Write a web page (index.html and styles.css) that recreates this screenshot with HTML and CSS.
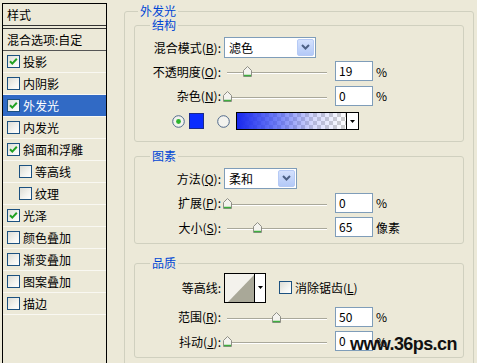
FILE: index.html
```html
<!DOCTYPE html>
<html>
<head>
<meta charset="utf-8">
<link rel="stylesheet" href="styles.css">
</head>
<body>
<div class="dialog">
  <div class="styles-panel">
    <div class="panel-head">样式</div>
    <div class="panel-blend">混合选项:自定</div>
    <ul class="style-list">
      <li class="item"><span class="cb"><svg viewBox="0 0 11 11" width="11" height="11"><path d="M2 5.2 L4.3 7.6 L8.8 2.8" stroke="#21A121" stroke-width="2" fill="none"/></svg></span>投影</li>
      <li class="item"><span class="cb"></span>内阴影</li>
      <li class="item selected"><span class="cb"><svg viewBox="0 0 11 11" width="11" height="11"><path d="M2 5.2 L4.3 7.6 L8.8 2.8" stroke="#21A121" stroke-width="2" fill="none"/></svg></span>外发光</li>
      <li class="item"><span class="cb"></span>内发光</li>
      <li class="item"><span class="cb"><svg viewBox="0 0 11 11" width="11" height="11"><path d="M2 5.2 L4.3 7.6 L8.8 2.8" stroke="#21A121" stroke-width="2" fill="none"/></svg></span>斜面和浮雕</li>
      <li class="item sub"><span class="cb"></span>等高线</li>
      <li class="item sub"><span class="cb"></span>纹理</li>
      <li class="item"><span class="cb"><svg viewBox="0 0 11 11" width="11" height="11"><path d="M2 5.2 L4.3 7.6 L8.8 2.8" stroke="#21A121" stroke-width="2" fill="none"/></svg></span>光泽</li>
      <li class="item"><span class="cb"></span>颜色叠加</li>
      <li class="item"><span class="cb"></span>渐变叠加</li>
      <li class="item"><span class="cb"></span>图案叠加</li>
      <li class="item"><span class="cb"></span>描边</li>
    </ul>
  </div>

  <div class="main">
    <div class="group outer">
      <span class="group-title">外发光</span>

      <div class="group sub-group g-structure">
        <span class="group-title">结构</span>
        <div class="row h24">
          <span class="lbl">混合模式(<u>B</u>):</span>
          <div class="combo w92"><span class="combo-text">滤色</span><span class="combo-btn"><svg viewBox="0 0 9 6" width="9" height="6"><path d="M1 1 L4.5 4.5 L8 1" stroke="#4D6185" stroke-width="2" fill="none"/></svg></span></div>
        </div>
        <div class="row h24">
          <span class="lbl">不透明度(<u>O</u>):</span>
          <div class="slider"><div class="track"></div><svg class="thumb" style="left:20px" viewBox="0 0 9 11" width="9" height="11"><path d="M0.5 4.5 L4.5 0.5 L8.5 4.5 V10.5 H0.5 Z" fill="#F4F3EE" stroke="#8F8F86"/><path d="M1 9.5 H8" stroke="#3FAE3F" stroke-width="1.5"/></svg></div>
          <span class="num">19</span><span class="unit">%</span>
        </div>
        <div class="row h25">
          <span class="lbl">杂色(<u>N</u>):</span>
          <div class="slider"><div class="track"></div><svg class="thumb" style="left:0px" viewBox="0 0 9 11" width="9" height="11"><path d="M0.5 4.5 L4.5 0.5 L8.5 4.5 V10.5 H0.5 Z" fill="#F4F3EE" stroke="#8F8F86"/><path d="M1 9.5 H8" stroke="#3FAE3F" stroke-width="1.5"/></svg></div>
          <span class="num">0</span><span class="unit">%</span>
        </div>
        <div class="row h26 color-row">
          <svg class="radio" viewBox="0 0 13 13" width="13" height="13"><circle cx="6.5" cy="6.5" r="5.8" fill="#F3F3EE" stroke="#50698A"/><circle cx="6.5" cy="6.5" r="2.4" fill="#2DB42D"/></svg>
          <span class="swatch"></span>
          <svg class="radio radio2" viewBox="0 0 13 13" width="13" height="13"><circle cx="6.5" cy="6.5" r="5.8" fill="#F3F3EE" stroke="#50698A"/></svg>
          <div class="grad"><span class="grad-fill"></span><span class="grad-btn"><svg viewBox="0 0 5 3" width="5" height="3"><path d="M0 0 H5 L2.5 3 Z" fill="#000"/></svg></span></div>
        </div>
      </div>

      <div class="group sub-group g-elements">
        <span class="group-title">图素</span>
        <div class="row h24">
          <span class="lbl">方法(<u>Q</u>):</span>
          <div class="combo w73"><span class="combo-text">柔和</span><span class="combo-btn"><svg viewBox="0 0 9 6" width="9" height="6"><path d="M1 1 L4.5 4.5 L8 1" stroke="#4D6185" stroke-width="2" fill="none"/></svg></span></div>
        </div>
        <div class="row h25">
          <span class="lbl">扩展(<u>P</u>):</span>
          <div class="slider"><div class="track"></div><svg class="thumb" style="left:0px" viewBox="0 0 9 11" width="9" height="11"><path d="M0.5 4.5 L4.5 0.5 L8.5 4.5 V10.5 H0.5 Z" fill="#F4F3EE" stroke="#8F8F86"/><path d="M1 9.5 H8" stroke="#3FAE3F" stroke-width="1.5"/></svg></div>
          <span class="num">0</span><span class="unit">%</span>
        </div>
        <div class="row h24">
          <span class="lbl">大小(<u>S</u>):</span>
          <div class="slider"><div class="track"></div><svg class="thumb" style="left:30px" viewBox="0 0 9 11" width="9" height="11"><path d="M0.5 4.5 L4.5 0.5 L8.5 4.5 V10.5 H0.5 Z" fill="#F4F3EE" stroke="#8F8F86"/><path d="M1 9.5 H8" stroke="#3FAE3F" stroke-width="1.5"/></svg></div>
          <span class="num">65</span><span class="unit">像素</span>
        </div>
      </div>

      <div class="group sub-group g-quality">
        <span class="group-title">品质</span>
        <div class="row h33">
          <span class="lbl">等高线:</span>
          <div class="contour">
            <span class="contour-preview"><svg viewBox="0 0 29 28" width="29" height="28"><polygon points="3,28 29,1 29,28" fill="#A9A898"/></svg></span>
            <span class="contour-btn"><svg viewBox="0 0 5 3" width="5" height="3"><path d="M0 0 H5 L2.5 3 Z" fill="#000"/></svg></span>
          </div>
          <span class="cb cb-aa"></span><span class="aa-text">消除锯齿(<u>L</u>)</span>
        </div>
        <div class="row h25">
          <span class="lbl">范围(<u>R</u>):</span>
          <div class="slider"><div class="track"></div><svg class="thumb" style="left:49px" viewBox="0 0 9 11" width="9" height="11"><path d="M0.5 4.5 L4.5 0.5 L8.5 4.5 V10.5 H0.5 Z" fill="#F4F3EE" stroke="#8F8F86"/><path d="M1 9.5 H8" stroke="#3FAE3F" stroke-width="1.5"/></svg></div>
          <span class="num">50</span><span class="unit">%</span>
        </div>
        <div class="row h24">
          <span class="lbl">抖动(<u>J</u>):</span>
          <div class="slider"><div class="track"></div><svg class="thumb" style="left:0px" viewBox="0 0 9 11" width="9" height="11"><path d="M0.5 4.5 L4.5 0.5 L8.5 4.5 V10.5 H0.5 Z" fill="#F4F3EE" stroke="#8F8F86"/><path d="M1 9.5 H8" stroke="#3FAE3F" stroke-width="1.5"/></svg></div>
          <span class="num">0</span><span class="unit">%</span>
        </div>
      </div>
    </div>
  </div>
</div>
<div class="watermark">www.36ps.cn</div>
</body>
</html>
```

FILE: styles.css
```css
* { box-sizing: border-box; }
html, body { margin: 0; padding: 0; }
body {
  width: 477px;
  height: 363px;
  overflow: hidden;
  position: relative;
  background: #ECE9D8;
  font-family: "Noto Sans CJK SC", "DejaVu Sans", sans-serif;
  font-size: 12px;
  color: #000;
}
u { text-decoration: underline; text-underline-offset: 1px; }

.dialog { display: flex; align-items: flex-start; }

/* left list */
.styles-panel {
  flex: none;
  margin: 3px 0 0 2px;
  width: 105px;
  height: 380px;
  border: 1px solid #000;
}
.panel-head {
  height: 22px;
  line-height: 21px;
  padding-left: 4px;
  border-bottom: 1px solid #333;
}
.panel-blend {
  margin-top: 2px;
  height: 23px;
  line-height: 21px;
  padding-left: 4px;
  border-top: 1px solid #333;
  border-bottom: 1px solid #555;
}
.style-list { list-style: none; margin: 0; padding: 0; }
.item {
  height: 22px;
  display: flex;
  align-items: center;
  gap: 3px;
  padding-left: 4px;
  border-bottom: 1px solid #F9F8F2;
}
.item.sub { padding-left: 16px; }
.item.selected { background: #316AC5; color: #fff; }

.cb {
  flex: none;
  width: 13px;
  height: 13px;
  border: 1px solid #1C5180;
  background: linear-gradient(135deg, #DCDCD5 0%, #F4F4F0 60%, #FFFFFF 100%);
  display: flex;
  align-items: center;
  justify-content: center;
}
.cb svg { display: block; }

/* right side group boxes */
.main { flex: none; margin-left: 17px; width: 350px; }
.group {
  position: relative;
  border: 1px solid #D0D0BF;
  border-radius: 3px;
}
.group-title {
  position: absolute;
  top: -7px;
  padding: 0 2px;
  line-height: 12px;
  background: #ECE9D8;
  color: #0046D5;
  white-space: nowrap;
}
.outer { margin-top: 11px; padding: 13px 9px 0; height: 420px; }
.outer > .group-title { left: 13px; }
.sub-group > .group-title { left: 15px; }

.g-structure { padding: 9px 0 7px; }
.g-elements { margin-top: 14px; padding: 9px 0 4px; }
.g-quality { margin-top: 19px; padding: 7px 0 4px; }

.row { display: flex; align-items: center; }
.h24 { height: 24px; }
.h25 { height: 25px; }
.h26 { height: 26px; }
.h33 { height: 33px; }

.lbl {
  flex: none;
  width: 86px;
  margin-right: 3px;
  text-align: right;
  white-space: nowrap;
}

/* combo box */
.combo {
  flex: none;
  display: flex;
  align-items: center;
  height: 21px;
  padding: 1px;
  border: 1px solid #7F9DB9;
  background: #fff;
}
.w92 { width: 92px; }
.w73 { width: 73px; }
.combo-text { padding-left: 3px; }
.combo-btn {
  margin-left: auto;
  width: 17px;
  height: 17px;
  border: 1px solid #B6CAF5;
  border-radius: 2px;
  background: linear-gradient(#D4E1FD, #B3C9F7);
  display: flex;
  align-items: center;
  justify-content: center;
}
.combo-btn svg { display: block; }

/* slider */
.slider {
  flex: none;
  position: relative;
  width: 100px;
  height: 12px;
  margin: 2px 0 0 3px;
}
.track {
  margin-top: 6px;
  height: 2px;
  border-top: 1px solid #A9A89A;
  border-bottom: 1px solid #FFFFFF;
}
.thumb { position: absolute; top: 0; margin-left: -4px; display: block; }

.num {
  flex: none;
  width: 38px;
  height: 20px;
  margin-left: 8px;
  padding-left: 3px;
  line-height: 18px;
  border: 1px solid #7F9DB9;
  background: #fff;
}
.unit { margin-left: 3px; }

/* color row */
.color-row { padding-left: 37px; }
.radio { flex: none; display: block; }
.swatch {
  flex: none;
  width: 15px;
  height: 16px;
  margin-left: 4px;
  background: #0A2CFF;
  border: 1px solid #1B2A8A;
}
.radio2 { margin-left: 13px; }
.grad {
  flex: none;
  display: flex;
  width: 123px;
  height: 18px;
  margin-left: 6px;
  border: 1px solid #000;
}
.grad-fill {
  flex: 1;
  background:
    linear-gradient(to right, rgba(24, 40, 238, 1) 0%, rgba(60, 80, 245, 0.75) 35%, rgba(120, 130, 250, 0.3) 70%, rgba(255, 255, 255, 0) 100%),
    repeating-conic-gradient(#CFCFCF 0 25%, #FFFFFF 0 50%) 0 0 / 8px 8px;
}
.grad-btn {
  flex: none;
  width: 12px;
  border-left: 1px solid #000;
  background: #fff;
  display: flex;
  align-items: center;
  justify-content: center;
}
.grad-btn svg, .contour-btn svg { display: block; }

/* contour */
.contour {
  flex: none;
  display: flex;
  width: 42px;
  height: 30px;
  border: 1px solid #000;
  background: #F3F2EC;
}
.contour-preview { flex: none; width: 29px; height: 28px; }
.contour-preview svg { display: block; }
.contour-btn {
  flex: 1;
  border-left: 1px solid #000;
  background: #fff;
  display: flex;
  align-items: flex-start;
  justify-content: center;
  padding-top: 12px;
}
.cb-aa { margin-left: 13px; }
.aa-text { margin-left: 3px; white-space: nowrap; }

/* watermark */
.watermark {
  position: absolute;
  left: 350px;
  top: 335px;
  font-family: "Liberation Sans", Arial, sans-serif;
  font-weight: bold;
  font-size: 18px;
  line-height: 18px;
  letter-spacing: -0.6px;
  color: #111;
}
```
